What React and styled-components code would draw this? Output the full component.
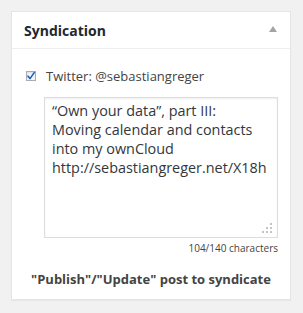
import React from "react";
import styled, { createGlobalStyle } from "styled-components";

const GlobalStyle = createGlobalStyle`
  body {
    margin: 0;
    background: #f1f1f1;
    font-family: "Open Sans", "Liberation Sans", sans-serif;
  }
`;

const tweet =
  "\u201COwn your data\u201D, part III:\nMoving calendar and contacts\ninto my ownCloud\nhttp://sebastiangreger.net/X18h";

export default function App() {
  return (
    <Page>
      <GlobalStyle />
      <Panel>
        <Header>
          <Title>Syndication</Title>
          <Toggle />
        </Header>
        <Inside>
          <CheckRow>
            <CheckBox>
              <svg width="10" height="10" viewBox="0 0 10 10">
                <path
                  d="M2 5.2 L4 7.6 L8.2 1.6"
                  fill="none"
                  stroke="#1e5ebe"
                  strokeWidth="1.6"
                  strokeLinecap="round"
                  strokeLinejoin="round"
                />
              </svg>
            </CheckBox>
            <CheckLabel>Twitter: @sebastiangreger</CheckLabel>
          </CheckRow>
          <MessageBox>
            <Message defaultValue={tweet} readOnly />
            <Grip>
              <svg width="12" height="12" viewBox="0 0 12 12">
                {[
                  [10, 2],
                  [6, 6],
                  [10, 6],
                  [2, 10],
                  [6, 10],
                  [10, 10]
                ].map(([cx, cy]) => (
                  <rect key={cx + "-" + cy} x={cx - 1} y={cy - 1} width="2" height="2" fill="#c3c4c7" />
                ))}
              </svg>
            </Grip>
          </MessageBox>
          <Counter>104/140 characters</Counter>
          <Hint>"Publish"/"Update" post to syndicate</Hint>
        </Inside>
      </Panel>
    </Page>
  );
}

const Page = styled.div`
  padding: 11px;
`;

const Panel = styled.div`
  box-sizing: border-box;
  width: 280px;
  height: 289px;
  background: #fff;
  border: 1px solid #e5e5e5;
  box-shadow: 0 1px 1px rgba(0, 0, 0, 0.04);
`;

const Header = styled.div`
  display: flex;
  align-items: center;
  justify-content: space-between;
  height: 36px;
  padding: 0 13px 0 12px;
  border-bottom: 1px solid #eeeeee;
`;

const Title = styled.h2`
  margin: 0;
  font-size: 14px;
  font-weight: 700;
  line-height: 19px;
  color: #23282d;
`;

const Toggle = styled.span`
  width: 0;
  height: 0;
  border-left: 4px solid transparent;
  border-right: 4px solid transparent;
  border-bottom: 6px solid #a0a5aa;
  margin-bottom: 3px;
`;

const Inside = styled.div`
  padding: 0 12px 0 14px;
`;

const CheckRow = styled.label`
  display: flex;
  align-items: center;
  gap: 10px;
  margin-top: 18px;
  height: 18px;
`;

const CheckBox = styled.span`
  box-sizing: border-box;
  display: flex;
  align-items: center;
  justify-content: center;
  width: 10px;
  height: 10px;
  border: 1px solid #a8acb0;
  background: #f4f6f8;
  box-shadow: inset 0 1px 2px rgba(0, 0, 0, 0.1);

  svg {
    flex: none;
  }
`;

const CheckLabel = styled.span`
  font-size: 13px;
  color: #444;
  line-height: 18px;
`;

const MessageBox = styled.div`
  position: relative;
  margin: 12px 0 0 18px;
  width: 234px;
  height: 141px;
`;

const Message = styled.textarea`
  box-sizing: border-box;
  display: block;
  width: 100%;
  height: 100%;
  margin: 0;
  padding: 3px 7px;
  border: 1px solid #dddddd;
  box-shadow: inset 0 1px 2px rgba(0, 0, 0, 0.07);
  resize: none;
  outline: none;
  overflow: hidden;
  white-space: pre;
  font-family: "Open Sans", "Liberation Sans", sans-serif;
  font-size: 14.4px;
  line-height: 19px;
  color: #32373c;
`;

const Grip = styled.span`
  position: absolute;
  right: 5px;
  bottom: 4px;
  line-height: 0;
`;

const Counter = styled.div`
  margin-top: 3px;
  text-align: right;
  font-size: 10px;
  line-height: 14px;
  color: #444;
`;

const Hint = styled.p`
  margin: 15px -12px 0 -14px;
  text-align: center;
  font-size: 13px;
  font-weight: 700;
  line-height: 18px;
  color: #444;
`;
